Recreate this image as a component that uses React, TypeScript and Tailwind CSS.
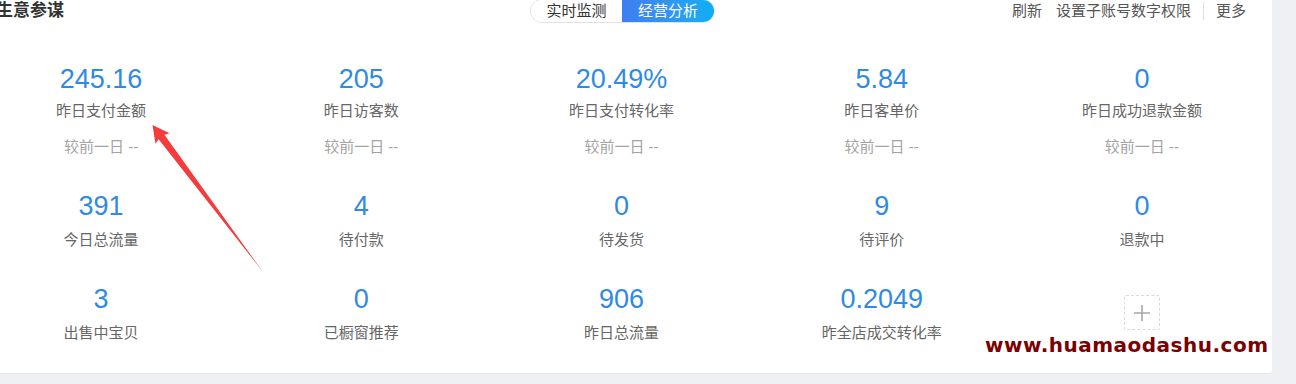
import React from "react";

type Item = { v?: string; l?: string; cmp?: boolean; plus?: boolean };

const rows: Item[][] = [
  [
    { v: "245.16", l: "昨日支付金额", cmp: true },
    { v: "205", l: "昨日访客数", cmp: true },
    { v: "20.49%", l: "昨日支付转化率", cmp: true },
    { v: "5.84", l: "昨日客单价", cmp: true },
    { v: "0", l: "昨日成功退款金额", cmp: true },
  ],
  [
    { v: "391", l: "今日总流量" },
    { v: "4", l: "待付款" },
    { v: "0", l: "待发货" },
    { v: "9", l: "待评价" },
    { v: "0", l: "退款中" },
  ],
  [
    { v: "3", l: "出售中宝贝" },
    { v: "0", l: "已橱窗推荐" },
    { v: "906", l: "昨日总流量" },
    { v: "0.2049", l: "昨全店成交转化率" },
    { plus: true },
  ],
];

const font = { fontFamily: '"Liberation Sans", "Noto Sans CJK SC", sans-serif' };

function Cell({ it, row }: { it: Item; row: number }) {
  if (it.plus) {
    return (
      <div className="flex flex-col items-center">
        <div className="mt-[12px] flex h-[35px] w-[36px] items-center justify-center border border-dashed border-[#d9d9d9] rounded-[2px]">
          <svg width="18" height="18" viewBox="0 0 18 18">
            <path d="M9 1v16M1 9h16" stroke="#a8a8a8" strokeWidth="1.6" />
          </svg>
        </div>
      </div>
    );
  }
  return (
    <div className="flex flex-col items-center">
      <div className="h-[32px] text-[27px] leading-[32px] text-[#2f8ae5]">{it.v}</div>
      <div className={`${row === 0 ? "mt-[6px]" : "mt-[8px]"} h-[20px] text-[15px] leading-[20px] text-[#666]`}>{it.l}</div>
      {it.cmp && <div className="mt-[16px] h-[20px] text-[15px] leading-[20px] text-[#a3a3a3]">较前一日 --</div>}
    </div>
  );
}

export default function App() {
  return (
    <div className="relative h-[384px] w-[1296px] overflow-hidden bg-[#eff0f4]" style={font}>
      <div className="-ml-[29px] h-[374px] w-[1301px] bg-white rounded-br-[3px] border-b border-[#e3e4e8]">
        <div className="flex h-[22px] items-center pl-[25px] pr-[26px]">
          <div className="w-[534px] text-[17px] font-bold text-[#333]">生意参谋</div>
          <div className="flex h-[24px] items-center overflow-hidden rounded-full border border-[#e2e2e2] text-[15px]">
            <div className="flex h-full w-[91px] items-center justify-center bg-white text-[#333]">实时监测</div>
            <div className="flex h-full w-[92px] items-center justify-center bg-gradient-to-r from-[#3f7def] to-[#0aaef4] text-white">经营分析</div>
          </div>
          <div className="flex-1" />
          <div className="flex items-center text-[15px] text-[#555]">
            <span>刷新</span>
            <span className="ml-[14px]">设置子账号数字权限</span>
            <span className="ml-[12px] h-[18px] w-px bg-[#e0e0e0]" />
            <span className="ml-[12px]">更多</span>
          </div>
        </div>
        <div className="mt-[41px] flex flex-col gap-y-[33px]">
          {rows.map((r, ri) => (
            <div key={ri} className="grid grid-cols-5">
              {r.map((it, i) => (
                <Cell key={i} it={it} row={ri} />
              ))}
            </div>
          ))}
        </div>
      </div>
      <svg className="absolute left-0 top-0" width="300" height="300" viewBox="0 0 300 300">
        <polygon
          points="152.5,125 169.5,133.2 164.4,134.8 263,272 158.6,139.2 155.5,143.8"
          fill="#f43c3c"
        />
      </svg>
      <div
        className="absolute left-[985px] top-[333px] text-[20px] font-bold leading-[24px] tracking-[0.5px] text-[#7d0000]"
        style={{ fontFamily: '"DejaVu Sans", sans-serif' }}
      >
        www.huamaodashu.com
      </div>
    </div>
  );
}
